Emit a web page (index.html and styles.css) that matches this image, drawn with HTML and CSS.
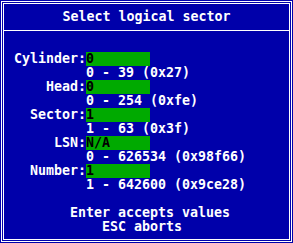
FILE: index.html
```html
<!DOCTYPE html>
<html lang="en">
<head>
    <meta charset="UTF-8">
    <meta name="viewport" content="width=device-width, initial-scale=1.0">
    <title>Select logical sector</title>
    <link rel="stylesheet" href="styles.css">
</head>
<body>
    <div class="screen">
        <div class="frame">
            <div class="window">
                <h1 class="title">Select logical sector</h1>
                <hr class="divider">

                <!-- Input fields -->
                <div class="form">
                    <label class="label">Cylinder:</label>
                    <span class="field"><span class="cursor">0</span></span>
                    <span></span>
                    <span class="range">0 - 39 (0x27)</span>

                    <label class="label">Head:</label>
                    <span class="field">0</span>
                    <span></span>
                    <span class="range">0 - 254 (0xfe)</span>

                    <label class="label">Sector:</label>
                    <span class="field">1</span>
                    <span></span>
                    <span class="range">1 - 63 (0x3f)</span>

                    <label class="label">LSN:</label>
                    <span class="field">N/A</span>
                    <span></span>
                    <span class="range">0 - 626534 (0x98f66)</span>

                    <label class="label">Number:</label>
                    <span class="field">1</span>
                    <span></span>
                    <span class="range">1 - 642600 (0x9ce28)</span>
                </div>

                <!-- Key hints -->
                <div class="hint">
                    <p class="hint-enter">Enter accepts values</p>
                    <p class="hint-esc">ESC aborts</p>
                </div>
            </div>
        </div>
    </div>
</body>
</html>
```

FILE: styles.css
```css
:root {
    --bg-color: #0000aa;
    --text-color: #ffffff;
    --field-color: #00aa00;
}

body {
    margin: 0;
    background-color: var(--bg-color);
}

.screen {
    width: 293px;
    height: 243px;
    padding: 1px;
    box-sizing: border-box;
    color: var(--text-color);
    font: bold 13.3px/14px "DejaVu Sans Mono", monospace;
    white-space: nowrap;
}

/* Double line border */
.frame {
    height: 100%;
    padding: 1px;
    border: 1px solid var(--text-color);
    box-sizing: border-box;
}

.window {
    height: 100%;
    border: 1px solid var(--text-color);
    box-sizing: border-box;
}

.title {
    margin: 0;
    padding-top: 6px;
    font: inherit;
    text-align: center;
}

.divider {
    height: 0;
    margin: 6px 0 0;
    border: 0;
    border-top: 1px solid var(--text-color);
}

/* Input fields */
.form {
    display: grid;
    grid-template-columns: 80px 1fr;
    grid-auto-rows: 14px;
    margin-top: 21px;
    padding-left: 2px;
}

.label {
    text-align: right;
}

.field {
    width: 64px;
    background-color: var(--field-color);
    color: #000;
}

/* Key hints */
.hint {
    margin-top: 14px;
    padding-left: 2px;
}

.hint p {
    margin: 0;
}

.hint-enter {
    padding-left: 64px;
}

.hint-esc {
    padding-left: 96px;
}
```
